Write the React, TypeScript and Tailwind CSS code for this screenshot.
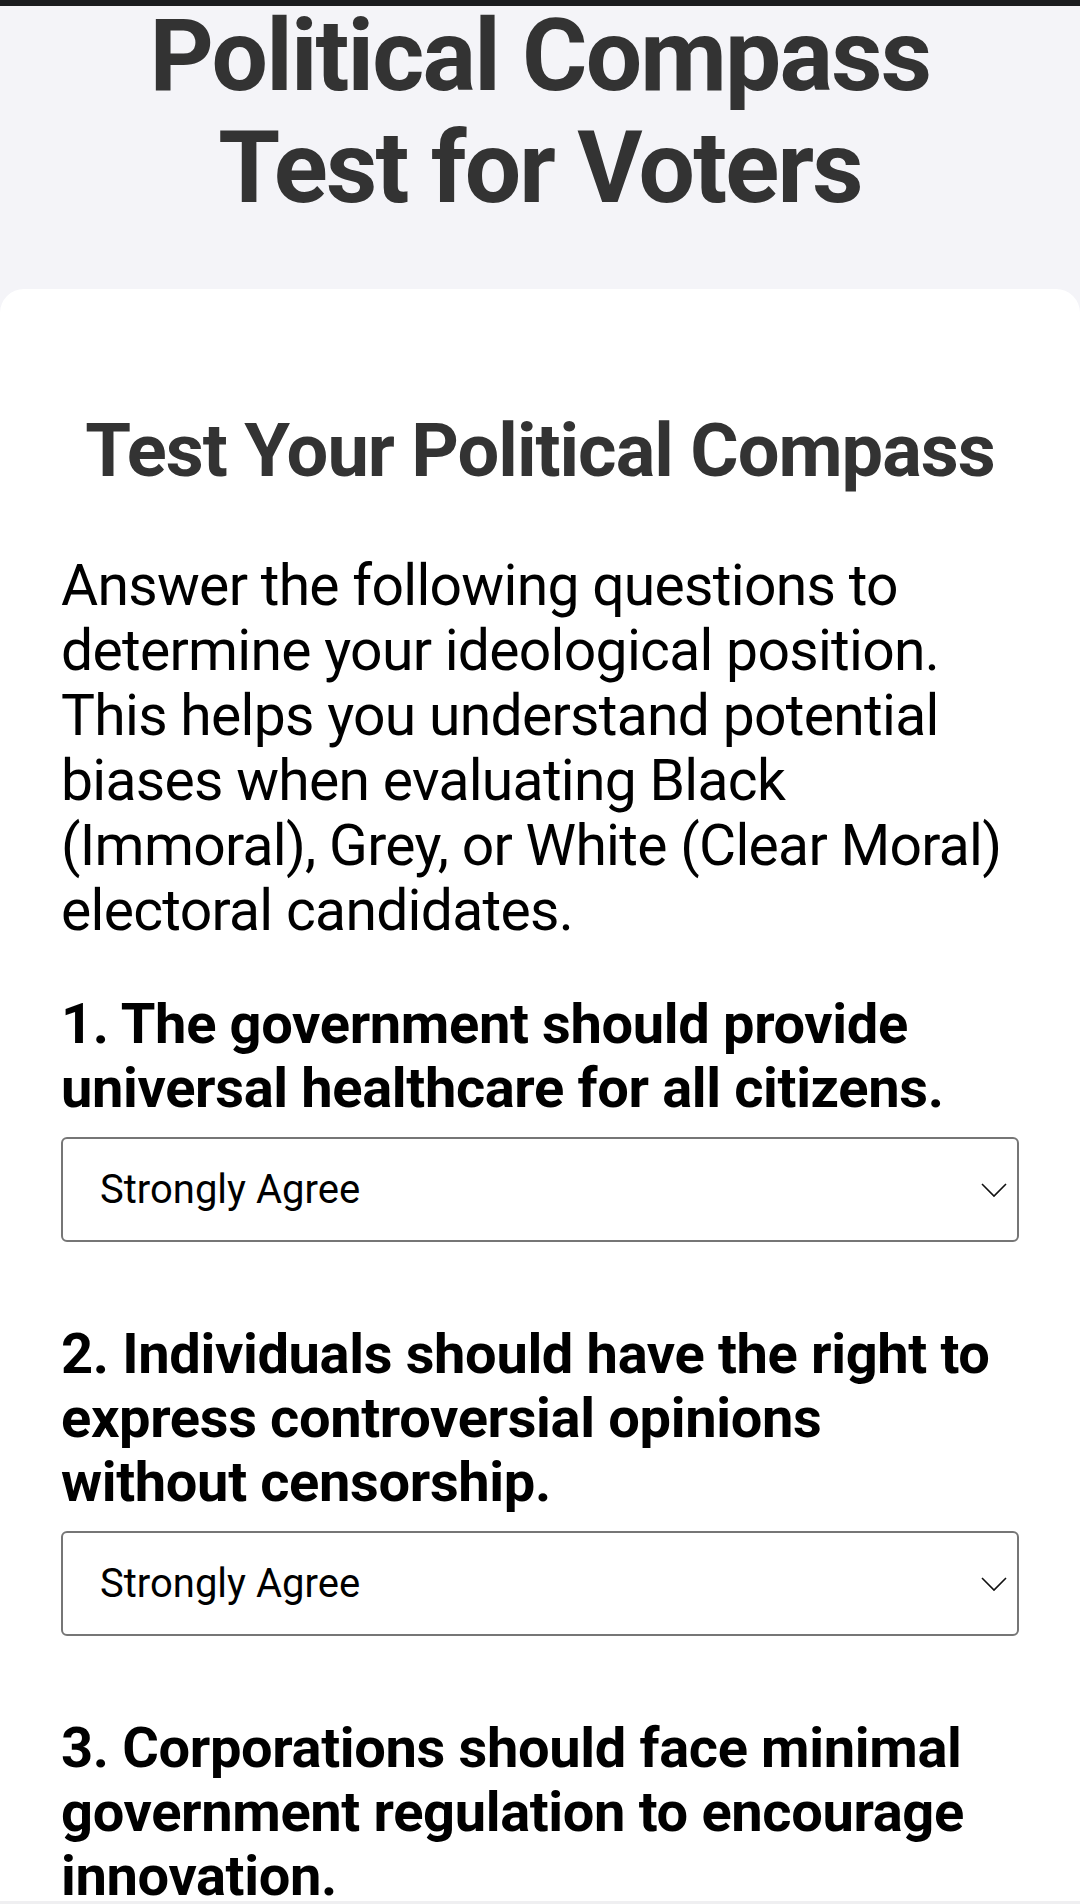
import { useState } from "react";

const OPTIONS = ["Strongly Agree", "Agree", "Neutral", "Disagree", "Strongly Disagree"];

const QUESTIONS = [
  "1. The government should provide universal healthcare for all citizens.",
  "2. Individuals should have the right to express controversial opinions without censorship.",
  "3. Corporations should face minimal government regulation to encourage innovation.",
  "4. Traditional values should guide national laws and policies.",
];

const Chevron = () => (
  <svg
    width="26"
    height="15"
    viewBox="0 0 26 15"
    fill="none"
    className="pointer-events-none absolute right-[12px] top-1/2 -translate-y-1/2">
    <path d="M1 1.5 L13 13.5 L25 1.5" stroke="#111" strokeWidth="1.6" />
  </svg>
);

const Question = ({ text, first }: { text: string; first: boolean }) => {
  const [answer, setAnswer] = useState(OPTIONS[0]);

  return (
    <div className={first ? "" : "mt-[80px]"}>
      <h3 className="text-[56px] leading-[64px] font-bold tracking-[-0.35px] text-black mb-[17px]">
        {text}
      </h3>
      <div className="relative">
        <select
          value={answer}
          onChange={(e) => setAnswer(e.target.value)}
          className="w-full h-[105px] appearance-none bg-white border-2 border-[#767676] rounded-[6px] pl-[37px] pr-[50px] text-[40px] text-black focus:outline-none">
          {OPTIONS.map((o) => (
            <option key={o} value={o}>
              {o}
            </option>
          ))}
        </select>
        <Chevron />
      </div>
    </div>
  );
};

const App = () => {
  return (
    <div
      className="min-h-screen bg-[#f4f4f8]"
      style={{ fontFamily: "Roboto, 'Noto Sans', Arial, sans-serif" }}>
      <div className="fixed top-0 left-0 right-0 h-[6px] bg-[#1b1c1f] z-10"></div>

      <header className="pb-[65px]">
        <h1 className="text-[100px] leading-[112px] font-bold tracking-[-1.8px] text-[#333333] text-center">
          Political Compass
          <br />
          Test for Voters
        </h1>
      </header>

      <main className="bg-white rounded-t-[24px] px-[61px] pt-[120px] pb-[120px]">
        <h2 className="text-[74px] leading-[84px] font-bold tracking-[-1px] text-[#333333] text-center mb-[60px]">
          Test Your Political Compass
        </h2>
        <p className="text-[57px] leading-[65px] tracking-[-0.7px] text-black mb-[49px]">
          Answer the following questions to determine your ideological
          position. This helps you understand potential biases when
          evaluating Black (Immoral), Grey, or White (Clear Moral) electoral
          candidates.
        </p>

        {QUESTIONS.map((q, i) => (
          <Question key={q} text={q} first={i === 0} />
        ))}
      </main>

      <div className="fixed bottom-0 left-0 right-0 h-[3px] bg-[#efeff1]"></div>
    </div>
  );
};

export default App;
